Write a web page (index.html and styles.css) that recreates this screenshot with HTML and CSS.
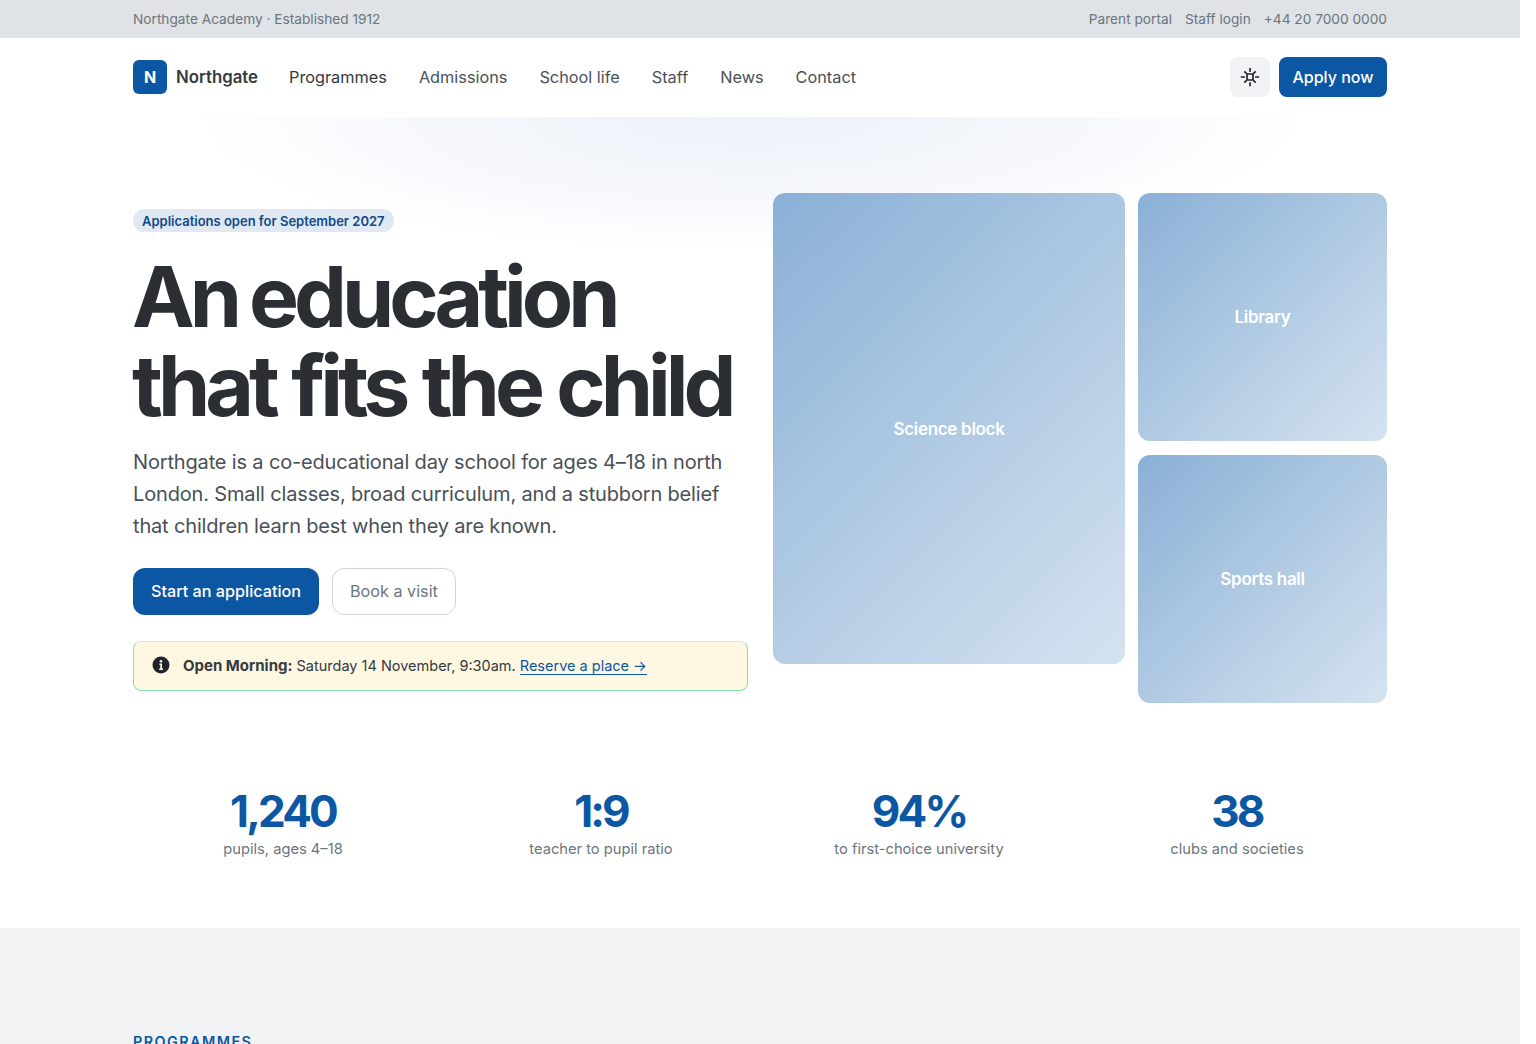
FILE: index.html
```html
<!DOCTYPE html>
<html lang="en">
<head>
  <meta charset="UTF-8">
  <meta name="viewport" content="width=device-width, initial-scale=1.0">
  <title>Northgate Academy</title>
  <link rel="stylesheet" href="styles.css">
</head>
<body>
  <div class="page">
    <div class="topbar">
      <div class="container topbar-inner">
        <span>Northgate Academy · Established 1912</span>
        <div class="topbar-links">
          <a href="#">Parent portal</a>
          <a href="#">Staff login</a>
          <span>+44 20 7000 0000</span>
        </div>
      </div>
    </div>

    <nav class="nav">
      <div class="container nav-inner">
        <a href="#" class="brand"><span class="brand-mark">N</span>Northgate</a>
        <div class="nav-links">
          <a href="#" class="current">Programmes</a>
          <a href="#">Admissions</a>
          <a href="#">School life</a>
          <a href="#">Staff</a>
          <a href="#">News</a>
          <a href="#">Contact</a>
        </div>
        <button type="button" class="theme-button" aria-label="Toggle theme">
          <svg width="20" height="20" viewBox="0 0 20 20" fill="none" stroke="currentColor" stroke-width="1.7" stroke-linecap="round">
            <path d="M7 7h6v6H7z"/>
            <path d="M10 1.5v2.7M10 15.8v2.7M1.5 10h2.7M15.8 10h2.7M4.8 4.8l1.4 1.4M13.8 13.8l1.4 1.4M4.8 15.2l1.4-1.4M13.8 6.2l1.4-1.4"/>
          </svg>
        </button>
        <a href="#" class="button-apply">Apply now</a>
      </div>
    </nav>

    <header class="hero">
      <div class="container hero-grid">
        <div class="hero-copy">
          <span class="eyebrow">Applications open for September 2027</span>
          <h1><span class="h1-tight">An education</span><br>that fits the child</h1>
          <p class="lede">Northgate is a co-educational day school for ages 4–18 in north London. Small classes, broad curriculum, and a stubborn belief that children learn best when they are known.</p>
          <div class="hero-actions">
            <a href="#" class="button button-primary">Start an application</a>
            <a href="#" class="button button-outline">Book a visit</a>
          </div>
          <div class="notice">
            <svg width="18" height="18" viewBox="0 0 18 18">
              <circle cx="9" cy="9" r="8.5" fill="#212529"/>
              <circle cx="9" cy="5.2" r="1.3" fill="#fff8e6"/>
              <path d="M7.4 7.6h2.6v5h1v1.4H7.2v-1.4h1.1V9H7.4z" fill="#fff8e6"/>
            </svg>
            <span><strong>Open Morning:</strong> Saturday 14 November, 9:30am. <a href="#">Reserve a place →</a></span>
          </div>
        </div>
        <div class="tiles">
          <div class="tile tile-tall">Science block</div>
          <div class="tile-stack">
            <div class="tile">Library</div>
            <div class="tile">Sports hall</div>
          </div>
        </div>
      </div>
    </header>

    <section class="stats">
      <div class="container stats-grid">
        <div class="stat"><div class="stat-number">1,240</div><div class="stat-label">pupils, ages 4–18</div></div>
        <div class="stat"><div class="stat-number">1:9</div><div class="stat-label">teacher to pupil ratio</div></div>
        <div class="stat"><div class="stat-number">94%</div><div class="stat-label">to first-choice university</div></div>
        <div class="stat"><div class="stat-number">38</div><div class="stat-label">clubs and societies</div></div>
      </div>
    </section>

    <section class="programmes">
      <div class="container">
        <p class="section-label">Programmes</p>
      </div>
    </section>
  </div>
</body>
</html>
```

FILE: styles.css
```css
html, body {
  margin: 0;
  height: 100%;
  overflow: hidden;
  background: #fff;
}
body {
  font-family: Inter, "Liberation Sans", sans-serif;
  color: #212529;
}
a {
  color: inherit;
  text-decoration: none;
}
.page {
  width: 1520px;
  height: 1044px;
  overflow: hidden;
}
.container {
  width: 1254px;
  margin: 0 auto;
}

/* top bar */
.topbar {
  background: #dfe3e7;
  color: #6c757d;
  font-size: 13.7px;
  height: 38px;
}
.topbar-inner {
  display: flex;
  justify-content: space-between;
  align-items: center;
  height: 100%;
}
.topbar-links {
  display: flex;
  gap: 13px;
  color: #6c757d;
}

/* nav */
.nav {
  height: 79px;
  background: #fff;
}
.nav-inner {
  display: flex;
  align-items: center;
  height: 78px;
}
.brand {
  display: flex;
  align-items: center;
  gap: 9px;
  font-size: 16.8px;
  font-weight: 600;
  color: #343a40;
}
.brand-mark {
  width: 34px;
  height: 34px;
  display: flex;
  align-items: center;
  justify-content: center;
  background: #0b57a4;
  color: #fff;
  border-radius: 6px;
  font-size: 16px;
  font-weight: 700;
}
.nav-links {
  display: flex;
  gap: 32px;
  margin-left: 31px;
  margin-right: auto;
  font-size: 16.3px;
  color: #495057;
}
.nav-links .current {
  color: #343a40;
}
.theme-button {
  width: 40px;
  height: 40px;
  display: flex;
  align-items: center;
  justify-content: center;
  padding: 0;
  border: none;
  border-radius: 8px;
  background: #f1f3f5;
  color: #212529;
}
.button-apply {
  margin-left: 9px;
  width: 108px;
  height: 40px;
  display: flex;
  align-items: center;
  justify-content: center;
  background: #0b57a4;
  color: #fff;
  border-radius: 8px;
  font-size: 16px;
  font-weight: 500;
}

/* hero */
.hero {
  padding: 76px 0 0;
  background: radial-gradient(ellipse 570px 140px at 750px 0, #edf2f9 0%, #f3f6fb 45%, rgba(255,255,255,0) 100%);
}
.hero-grid {
  display: grid;
  grid-template-columns: 615px 614px;
  gap: 25px;
  align-items: start;
}
.hero-copy {
  display: flex;
  flex-direction: column;
  align-items: flex-start;
  padding-top: 16px;
}
.eyebrow {
  padding: 0 9px;
  height: 23px;
  display: flex;
  align-items: center;
  border-radius: 12px;
  background: #dfe8f3;
  color: #124a85;
  font-size: 13px;
  font-weight: 600;
}
h1 {
  margin: 20px 0 0 -1px;
  font-size: 84px;
  line-height: 89px;
  font-weight: 700;
  letter-spacing: -5px;
  word-spacing: 1.5px;
  white-space: nowrap;
  color: #2b2f33;
}
.h1-tight {
  word-spacing: -3px;
}
.lede {
  margin: 16px 0 0;
  font-size: 20px;
  line-height: 32px;
  letter-spacing: -0.16px;
  color: #495057;
}
.hero-actions {
  display: flex;
  gap: 13px;
  margin-top: 26px;
}
.button {
  height: 47px;
  box-sizing: border-box;
  padding: 0 18px 2px;
  display: flex;
  align-items: center;
  border-radius: 12px;
  font-size: 16.2px;
  font-weight: 500;
}
.button-primary {
  background: #0b57a4;
  color: #fff;
}
.button-outline {
  padding: 0 17px 2px;
  border: 1px solid #ced4da;
  color: #6c757d;
  font-weight: 400;
}
.notice {
  width: 100%;
  box-sizing: border-box;
  height: 50px;
  margin-top: 26px;
  padding: 0 18px 2px;
  display: flex;
  align-items: center;
  gap: 13px;
  background: #fef8e3;
  border: 1px solid #86e0b4;
  border-top-color: #cdeec4;
  border-radius: 8px;
  font-size: 14.5px;
  color: #343a40;
}
.notice strong {
  font-size: 15px;
}
.notice svg {
  flex: none;
}
.notice a {
  color: #0b57a4;
  border-bottom: 1px solid #0b57a4;
}

/* picture tiles */
.tiles {
  display: grid;
  grid-template-columns: 352px 249px;
  gap: 13px;
  align-items: start;
}
.tile-stack {
  display: flex;
  flex-direction: column;
  gap: 14px;
}
.tile {
  height: 248px;
  display: flex;
  align-items: center;
  justify-content: center;
  border-radius: 12px;
  background: linear-gradient(135deg, #8ab0d6, #d5e3f0);
  color: #fff;
  font-size: 17px;
  font-weight: 600;
  letter-spacing: -0.3px;
}
.tile-tall {
  height: 471px;
}

/* stats */
.stats {
  height: 225px;
}
.stats-grid {
  display: grid;
  grid-template-columns: repeat(4, 300px);
  gap: 18px;
  padding-top: 83px;
}
.stat {
  text-align: center;
}
.stat-number {
  font-size: 44px;
  line-height: 50px;
  font-weight: 700;
  letter-spacing: -0.065em;
  color: #0b57a4;
}
.stat-label {
  margin-top: 2px;
  font-size: 14.7px;
  line-height: 22px;
  color: #6c757d;
}

/* programmes */
.programmes {
  height: 200px;
  background: #f0f2f4;
  padding-top: 106px;
}
.section-label {
  margin: 0;
  font-size: 14.4px;
  line-height: 16px;
  font-weight: 600;
  letter-spacing: 0.1em;
  text-transform: uppercase;
  color: #0b57a4;
}
```
